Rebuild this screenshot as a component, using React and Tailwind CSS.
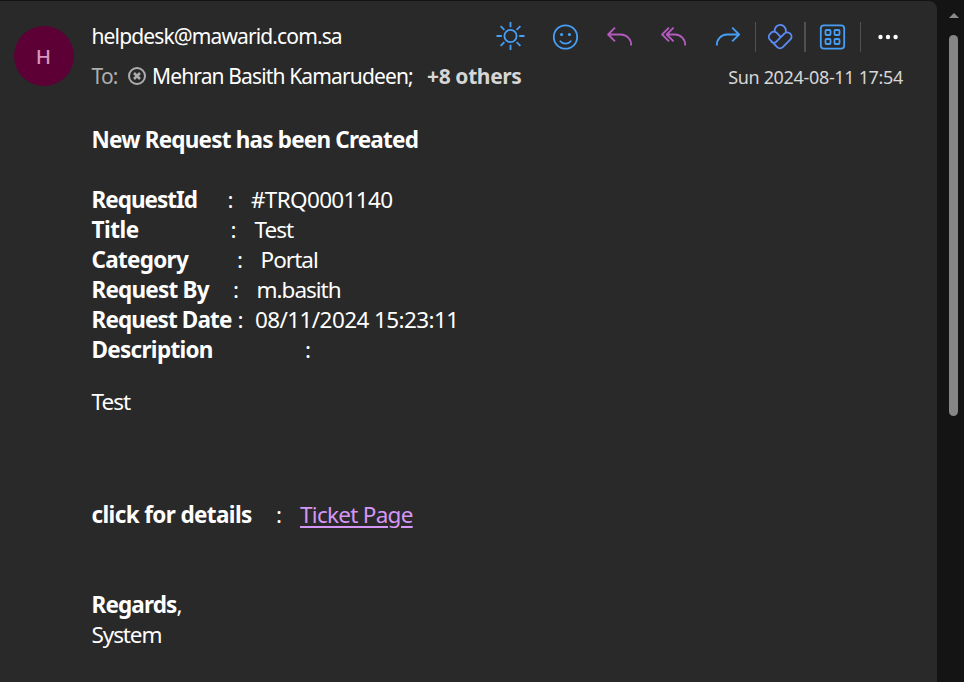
const fields = [
  { label: "RequestId", lw: "w-[136px]", lt: "tracking-[-1px]", value: "#TRQ0001140", vw: "w-[23.5px]", vt: "tracking-[-0.67px]" },
  { label: "Title", lw: "w-[139px]", lt: "tracking-[-0.5px]", value: "Test", vw: "w-[24px]", vt: "tracking-[-0.95px]" },
  { label: "Category", lw: "w-[145.5px]", lt: "tracking-[-0.72px]", value: "Portal", vw: "w-[23.5px]", vt: "tracking-[-0.95px]" },
  { label: "Request By", lw: "w-[141.5px]", lt: "tracking-[-0.8px]", value: "m.basith", vw: "w-[23.5px]", vt: "tracking-[-1px]" },
  { label: "Request Date", lw: "w-[146px]", lt: "tracking-[-0.88px]", value: "08/11/2024 15:23:11", vw: "w-[17.5px]", vt: "tracking-[-0.6px]" },
  { label: "Description", lw: "w-[213.5px]", lt: "tracking-[-0.7px]", value: "", vw: "w-[20px]", vt: "" },
];

function Icon({ box, className, children, color, sw = 1.8 }) {
  return (
    <svg viewBox={box} className={`h-[30px] shrink-0 ${className}`} fill="none" stroke={color} strokeWidth={sw} strokeLinecap="round" strokeLinejoin="round">
      {children}
    </svg>
  );
}

function Toolbar() {
  return (
    <div className="mt-px flex h-[30px] items-center">
      <Icon box="484 22 54 30" className="w-[54px]" color="#479ef5">
        <circle cx="510.5" cy="36" r="6.1" />
        <path strokeLinecap="butt" d="M510.5 22v5.3M510.5 44.7V50M496.5 36h5.3M519.2 36h5.3M500.6 26.1l3.8 3.8M516.6 42.1l3.8 3.8M520.4 26.1l-3.8 3.8M504.4 42.1l-3.8 3.8" />
      </Icon>
      <Icon box="538 22 54 30" className="w-[54px]" color="#479ef5">
        <circle cx="565.5" cy="37" r="11.7" />
        <path d="M560.3 41.3c2.6 3.2 7.8 3.2 10.4 0" />
        <path strokeWidth="3.2" d="M561.6 34.5h.01M569.4 34.5h.01" />
      </Icon>
      <Icon box="592 22 54 30" className="w-[54px]" color="#b55bc0">
        <path strokeLinecap="butt" d="M615 27.6l-6.9 6.9 6.9 6.9M608.4 34.5h12.4a10.4 10.4 0 0 1 10.4 11" />
      </Icon>
      <Icon box="646 22 54 30" className="w-[54px]" color="#b55bc0">
        <path strokeLinecap="butt" d="M669 27.6l-6.9 6.9 6.9 6.9M673.6 27.6l-6.9 6.9 6.9 6.9M667 34.5h8a10.2 10.2 0 0 1 10.2 11" />
      </Icon>
      <Icon box="700 22 55 30" className="w-[55px]" color="#479ef5">
        <path strokeLinecap="butt" d="M732.2 27.6l6.9 6.9-6.9 6.9M739 34.5h-12a10.4 10.4 0 0 0-10.2 11" />
      </Icon>
      <div className="h-[30px] w-px bg-[#505050]" />
      <Icon box="756 22 48 30" className="w-[48px]" color="#5c8df6">
        <path d="M774.8 31.8a5.6 5.6 0 1 1 11-.4M774.8 31.8c-1.3-.3-2.7 0-3.7 1l-1 1c-1.7 1.8-1.7 4.4 0 6.1l7.1 7.2c1.6 1.6 4 1.6 5.6 0l7.4-7.4c1.8-1.8 1.8-4.3.1-6-1.7-1.8-4.3-1.8-6-.1l-8.2 8.2a3.2 3.2 0 0 1-4.6 0M774.8 31.8c.8.2 1.4.5 2 1.1l3.3 3.4" />
      </Icon>
      <div className="h-[30px] w-[2px] bg-[#505050]" />
      <Icon box="806 22 54 30" className="w-[54px]" color="#479ef5">
        <rect x="820.8" y="25.3" width="23.4" height="23.4" rx="3.2" />
        <rect x="825.5" y="30" width="5" height="5" rx="1" />
        <rect x="834.5" y="30" width="5" height="5" rx="1" />
        <rect x="825.5" y="39" width="5" height="5" rx="1" />
        <rect x="834.5" y="39" width="5" height="5" rx="1" />
      </Icon>
      <div className="h-[30px] w-px bg-[#505050]" />
      <Icon box="861 22 42 30" className="w-[42px]" color="none">
        <g fill="#fff"><circle cx="880.5" cy="37" r="2.2" /><circle cx="888" cy="37" r="2.2" /><circle cx="895.6" cy="37" r="2.2" /></g>
      </Icon>
    </div>
  );
}

export default function App() {
  return (
    <div className="flex h-[682px] w-[964px] overflow-hidden bg-[#141414] font-['Noto_Sans',sans-serif] text-white">
      <main className="mt-px flex h-[681px] w-[937px] flex-col rounded-tr-[8px] bg-[#292929]">
        <header className="flex h-[109px] pl-[14px]">
          <div className="mt-[25px] flex h-[60px] w-[60px] shrink-0 items-center justify-center rounded-full bg-[#5c0036] text-[20.5px] font-medium text-[#da94c0]"><span className="pr-px pt-px">H</span></div>
          <div className="ml-[17.5px] w-[811.5px] whitespace-nowrap">
            <div className="flex h-[49px] justify-between pt-[20px]">
              <span className="text-[21px] leading-[30px] tracking-[-0.87px]">helpdesk@mawarid.com.sa</span>
              <Toolbar />
            </div>
            <div className="flex h-[40px] items-center pt-[11px] text-[21px] leading-[28px]">
              <span className="w-[36.5px] tracking-[-0.8px] text-[#adadad]">To:</span>
              <svg viewBox="0 0 18 18" className="mr-[6px] h-[18px] w-[18px] shrink-0" fill="none" stroke="#adadad" strokeWidth="2">
                <circle cx="9" cy="9" r="8" />
                <path strokeWidth="2.6" d="M6 6l6 6M12 6l-6 6" />
              </svg>
              <span className="w-[275px] tracking-[-0.86px]">Mehran Basith Kamarudeen;</span>
              <span className="font-bold tracking-[-0.37px] text-[#d6d6d6]">+8 others</span>
              <span className="ml-auto pt-[3px] text-[18px] tracking-[-0.33px] text-[#d6d6d6]">Sun 2024-08-11 17:54</span>
            </div>
          </div>
        </header>
        <section className="whitespace-nowrap pl-[91.5px] pt-[15px] text-[22.5px] leading-[30px]">
          <h1 className="font-bold"><span className="tracking-[-0.8px]">New Request has been Created</span></h1>
          <div className="mt-[30px]">
            {fields.map((f) => (
              <div key={f.label} className="flex h-[30px]">
                <b className={`shrink-0 ${f.lw}`}><span className={f.lt}>{f.label}</span></b>
                <span className={`shrink-0 ${f.vw}`}>:</span>
                <span className={f.vt}>{f.value}</span>
              </div>
            ))}
          </div>
          <p className="mt-[22px]"><span className="tracking-[-1px]">Test</span></p>
          <div className="mt-[83px] flex">
            <b className="w-[184.5px]"><span className="tracking-[-0.62px]">click for details</span></b>
            <span className="w-[24px]">:</span>
            <a className="tracking-[-0.72px] text-[#d696f5] underline decoration-2 underline-offset-[3px]">Ticket Page</a>
          </div>
          <p className="mt-[60px]"><b className="tracking-[-0.85px]">Regards</b>,</p>
          <p><span className="tracking-[-1.1px]">System</span></p>
        </section>
      </main>
      <aside className="flex flex-1 flex-col items-center pl-[6px] pt-[13px]">
        <svg viewBox="0 0 10 5" className="h-[5px] w-[10px]"><path d="M5 0l5 5H0z" fill="#8b8b8b" /></svg>
        <div className="mt-[17px] h-[381px] w-[9px] rounded-full bg-[#868686]" />
      </aside>
    </div>
  );
}
